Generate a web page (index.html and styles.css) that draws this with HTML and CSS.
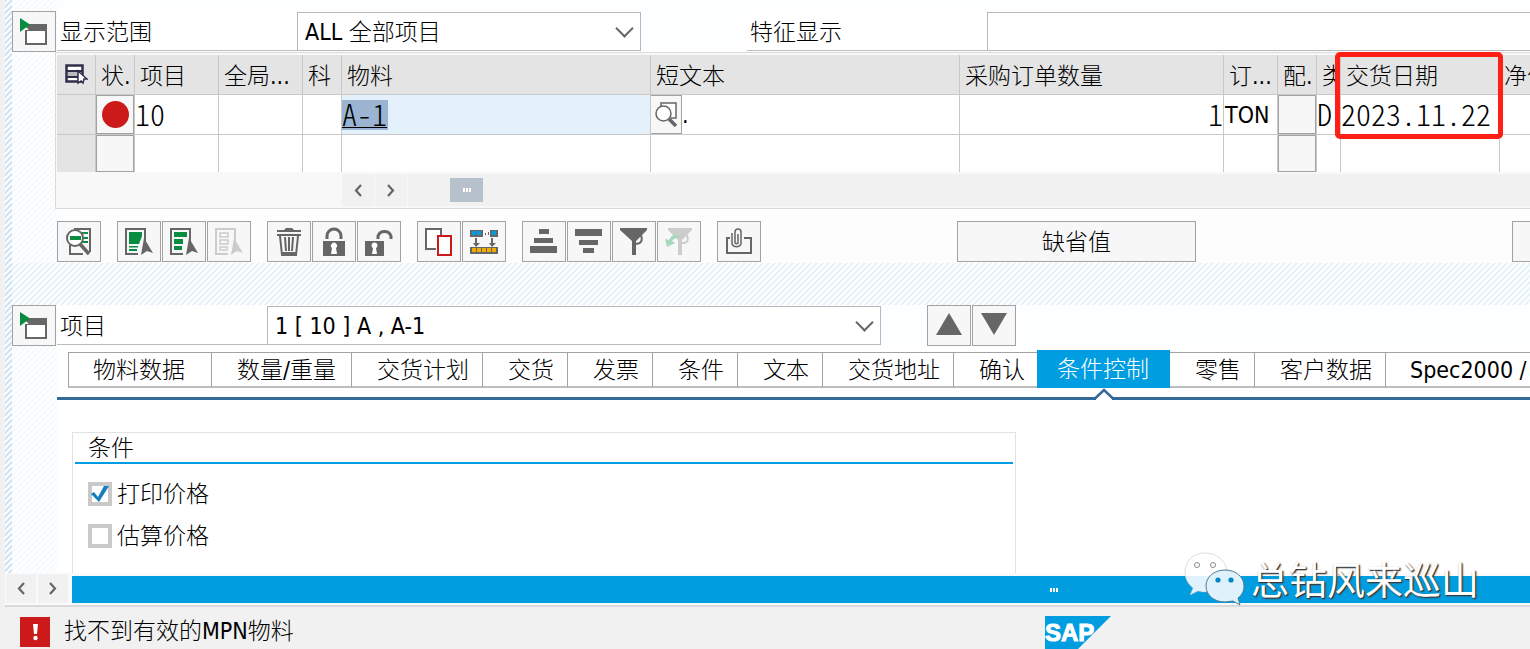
FILE: index.html
```html
<!DOCTYPE html>
<html lang="zh-CN">
<head>
<meta charset="utf-8">
<title>采购订单</title>
<link rel="stylesheet" href="styles.css">
</head>
<body>
<svg class="defs" aria-hidden="true">
  <symbol id="i-expand" viewBox="0 0 28 27"><path d="M6 6h21v21H5V12H9L6 9z" fill="#666"/><path d="M7 13h18v12H7z" fill="#fff"/><path d="M0 0l10 6.500L0 14z" fill="#078c40"/></symbol>
  <symbol id="i-left" viewBox="0 0 8 13"><path d="M7 1L2 6.500L7 12" fill="none" stroke="#666" stroke-width="2.200"/></symbol>
  <symbol id="i-right" viewBox="0 0 8 13"><path d="M1 1L6 6.500L1 12" fill="none" stroke="#666" stroke-width="2.200"/></symbol>
  <symbol id="i-doc" viewBox="0 0 28 28"><path d="M13 26H1V1h19v14" fill="none" stroke="currentColor" stroke-width="2"/></symbol>
  <symbol id="i-cursor" viewBox="0 0 28 28"><path d="M19 10l9 15-6-2-6 4z" fill="currentColor"/></symbol>
</svg>
<div class="app">
  <main class="work">
    <section class="row filter">
      <button class="ib" aria-label="展开抬头"><svg width="28" height="27"><use href="#i-expand"/></svg></button>
      <label class="lbl lbl-wide" for="scope">显示范围</label>
      <span class="pick pick-scope"><select id="scope"><option>ALL 全部项目</option></select></span>
      <label class="lbl lbl-feature" for="feature">特征显示</label>
      <input class="feature" id="feature" type="text">
    </section>

    <section class="grid-box">
      <table class="grid">
        <colgroup><col class="c39"><col class="c39"><col class="c84"><col class="c84"><col class="c39"><col class="c309"><col class="c309"><col class="c264"><col class="c54"><col class="c39"><col class="c24"><col class="c159"><col></colgroup>
        <thead>
          <tr>
            <th class="sel"><svg width="23" height="21" viewBox="0 0 23 21"><path d="M1.500 1.500h16v16h-16z" fill="#fff" stroke="#2f2f4a" stroke-width="2.500"/><path d="M2 6h16v2H2zM2 12h12v2H2z" fill="#2f2f4a"/><path d="M3 8h12v4H3z" fill="#bbb"/><path d="M13 7l9 8h-3l-1 4-2-2-3 2z" fill="#fff" stroke="#2f2f4a" stroke-width="1.500"/></svg></th>
            <th>状.</th><th>项目</th><th>全局...</th><th>科</th><th>物料</th><th>短文本</th><th>采购订单数量</th><th>订...</th><th>配.</th><th>类</th><th class="marked">交货日期<span class="mark"></span></th><th>净价</th>
          </tr>
        </thead>
        <tbody>
          <tr>
            <td class="sel"></td>
            <td><button class="cell-btn" aria-label="状态"><span class="dot"></span></button></td>
            <td class="mono">10</td><td></td><td></td>
            <td class="active"><input class="mono material" type="text" value="A-1" aria-label="物料"></td>
            <td><div class="text-cell"><button class="cell-btn help" aria-label="搜索帮助"><svg width="23" height="25" viewBox="0 0 23 25"><path d="M6 4V1h15v15h-5" fill="#fff" stroke="#666" stroke-width="1.500"/><circle cx="8.500" cy="11.500" r="7.500" fill="#fff" stroke="#666" stroke-width="1.500"/><path d="M14 17l7 7" stroke="#666" stroke-width="3.500"/></svg></button>.</div></td>
            <td class="mono num">1</td><td class="unit">TON</td>
            <td><button class="cell-btn" aria-label="配置"></button></td>
            <td class="mono">D</td><td class="mono">2023.11.22</td><td></td>
          </tr>
          <tr>
            <td class="sel"></td><td><button class="cell-btn" aria-label="状态"></button></td><td></td><td></td><td></td><td></td><td></td><td></td><td></td><td><button class="cell-btn" aria-label="配置"></button></td><td></td><td></td><td></td>
          </tr>
        </tbody>
      </table>
      <div class="hbar">
        <button aria-label="向左"><svg width="8" height="13"><use href="#i-left"/></svg></button>
        <button aria-label="向右"><svg width="8" height="13"><use href="#i-right"/></svg></button>
        <div class="track"><span class="thumb"><i></i><i></i><i></i></span></div>
      </div>
    </section>

    <section class="toolbar">
      <div class="grp"><button class="ib" aria-label="明细"><svg width="28" height="28" viewBox="0 0 28 28"><path d="M9 1h16v23M5 17v9h13" fill="none" stroke="#666" stroke-width="2"/><path d="M17 4h6v2h-6zM18 9h5v2h-5zM17 13h6v2h-6z" fill="#078c40"/><circle cx="10" cy="10" r="8" fill="#fff" stroke="#666" stroke-width="2"/><path d="M5 8h11v4H5z" fill="#078c40"/><path d="M15 16l9 10" stroke="#666" stroke-width="3.500"/></svg></button></div>
      <div class="grp">
        <button class="ib" aria-label="全选"><svg width="28" height="28" viewBox="0 0 28 28"><use href="#i-doc"/><path d="M4 4h13v4l-3 8H4zM4 18h9v1.500H4zM4 21h8v2H4z" fill="#078c40"/><use href="#i-cursor"/></svg></button>
        <button class="ib" aria-label="选择块"><svg width="28" height="28" viewBox="0 0 28 28"><use href="#i-doc"/><path d="M4 4h13v5H4zM4 11h9v5H4zM4 18h8v4H4z" fill="#078c40"/><use href="#i-cursor"/></svg></button>
        <button class="ib off" aria-label="取消选择" disabled><svg width="28" height="28" viewBox="0 0 28 28"><use href="#i-doc"/><path d="M5 5h8v4H5zM5 12h8v4H5zM5 19h7v3H5z" fill="none" stroke="currentColor" stroke-width="1.500"/><use href="#i-cursor"/></svg></button>
      </div>
      <div class="grp">
        <button class="ib" aria-label="删除"><svg width="28" height="30" viewBox="0 0 28 30"><path d="M2 3h7l2-2h6l2 2h7v2H2z" fill="#666"/><path d="M2 8h24M5 9l2 19h14l2-19M10 10l1 14M14 10v14M18 10l-1 14" fill="none" stroke="#666" stroke-width="2"/><path d="M7 25h14v4H7z" fill="#666"/></svg></button>
        <button class="ib" aria-label="锁定"><svg width="28" height="30" viewBox="0 0 28 30"><path d="M7 12V9a7 7 0 0 1 14 0v3" fill="none" stroke="#666" stroke-width="3"/><path d="M3 14h22v15H3z" fill="#666"/><path d="M11 27l1-6a3 3 0 1 1 4 0l1 6z" fill="#fff"/></svg></button>
        <button class="ib" aria-label="解锁"><svg width="28" height="30" viewBox="0 0 28 30"><path d="M13 12V9a7 7 0 0 1 13 0v3" fill="none" stroke="#666" stroke-width="3"/><path d="M0 14h19v15H0z" fill="#666"/><path d="M7 27l1-6a3 3 0 1 1 3 0l1 6z" fill="#fff"/></svg></button>
      </div>
      <div class="grp">
        <button class="ib" aria-label="复制"><svg width="28" height="28" viewBox="0 0 28 28"><path d="M11 21H1V1h15v6" fill="#fff" stroke="#666" stroke-width="2"/><path d="M13 8h13v19H13z" fill="#fff" stroke="#cc1a1a" stroke-width="2"/></svg></button>
        <button class="ib" aria-label="替换值"><svg width="28" height="26" viewBox="0 0 28 26"><path d="M0 1h28v7H0z" fill="#666"/><path d="M2 2h4v4H2zM7 2h4v4H7zM22 2h4v4h-4z" fill="#009de0"/><path d="M13 0h7v9h-7z" fill="#f7f7f7"/><path d="M15 4h1v2h-1zM18 3h1v3h-1z" fill="#666"/><path d="M6 9v7M22 9v7" stroke="#666" stroke-width="2"/><path d="M3 14h7l-4 4zM19 14h7l-4 4zM0 18h28v7H0z" fill="#666"/><path d="M2 19h4v4H2zM7 19h4v4H7zM12 19h4v4h-4zM17 19h4v4h-4zM22 19h4v4h-4z" fill="#f0ab00"/></svg></button>
      </div>
      <div class="grp">
        <button class="ib" aria-label="升序"><svg width="28" height="26" viewBox="0 0 28 26"><path d="M9 0h10v5H9zM4 9h19v5H4zM0 17h27v7H0z" fill="#666"/></svg></button>
        <button class="ib" aria-label="降序"><svg width="28" height="26" viewBox="0 0 28 26"><path d="M0 0h27v7H0zM4 11h19v5H4zM8 19h11v5H8z" fill="#666"/></svg></button>
        <button class="ib" aria-label="过滤"><svg width="28" height="28" viewBox="0 0 28 28"><path d="M0 0h27v2L16 13v14h-4V13L0 2z" fill="#666"/><path d="M21 7c2 6 0 9-6 9" fill="none" stroke="#666" stroke-width="2"/></svg></button>
        <button class="ib off" aria-label="取消过滤" disabled><svg width="28" height="28" viewBox="0 0 28 28"><path d="M3 0h24v2L17 12v15h-4V12L3 2z" fill="currentColor"/><path d="M22 7c2 6 0 8-5 8" fill="none" stroke="currentColor" stroke-width="2"/><path d="M14 7C8 6 6 8 4 12L0 11l2 8 8-4-3-2c1-2 3-3 7-3z" fill="#a9d8bd"/></svg></button>
      </div>
      <div class="grp"><button class="ib" aria-label="附件"><svg width="28" height="28" viewBox="0 0 28 28"><path d="M5 10H2v15h24V10h-7" fill="none" stroke="#666" stroke-width="2"/><path d="M7 5v11a5 5 0 0 0 9 0V4a3 3 0 0 0-6 0v11a2 2 0 0 0 3 0V6" fill="none" stroke="#666" stroke-width="1.500"/></svg></button></div>
      <button class="wide">缺省值</button>
      <button class="wide next" aria-label="更多"></button>
    </section>

    <section class="row item">
      <button class="ib" aria-label="展开项目"><svg width="28" height="27"><use href="#i-expand"/></svg></button>
      <label class="lbl lbl-item" for="item">项目</label>
      <span class="pick pick-item"><select id="item"><option>1 [ 10 ] A , A-1</option></select></span>
      <div class="grp nav">
        <button class="ib" aria-label="上一项"><svg width="28" height="26" viewBox="0 0 28 26"><path d="M14 0l13 22H1z" fill="#666"/></svg></button>
        <button class="ib" aria-label="下一项"><svg width="28" height="26" viewBox="0 0 28 26"><path d="M1 0h26L14 22z" fill="#666"/></svg></button>
      </div>
    </section>

    <section class="detail">
      <nav class="tabs">
        <button>物料数据</button><button class="pair">数量/重量</button><button>交货计划</button><button>交货</button><button>发票</button><button>条件</button><button>文本</button><button>交货地址</button><button class="last">确认</button><button class="on">条件控制<svg class="notch" width="20" height="12" viewBox="0 0 20 12"><path d="M2 10l8-8 8 8v2H2z" fill="#fff"/><path d="M1 10.500L10 2l9 8.500" fill="none" stroke="#346a97" stroke-width="2.500"/></svg></button><button>零售</button><button>客户数据</button><button>Spec2000 /</button>
      </nav>
      <div class="panel">
        <h2>条件</h2>
        <label class="check"><input type="checkbox" checked><svg class="tick" width="20" height="20" viewBox="0 0 20 20"><path d="M1 10l3-2 4 5 6-11h5L9 18z" fill="#147fc0"/></svg>打印价格</label>
        <label class="check"><input type="checkbox">估算价格</label>
      </div>
    </section>
  </main>

  <div class="page-bar">
    <button aria-label="向左"><svg width="8" height="13"><use href="#i-left"/></svg></button>
    <button aria-label="向右"><svg width="8" height="13"><use href="#i-right"/></svg></button>
    <div class="blue"><i></i><i></i><i></i></div>
  </div>

  <footer class="status">
    <svg class="err" width="30" height="30" viewBox="0 0 30 30"><path d="M0 0h30v30H0z" fill="#cc1a1a"/><path d="M13 7h5l-1 10h-3z" fill="#fff"/><circle cx="15.500" cy="21" r="2.200" fill="#fff"/></svg>
    <span class="msg">找不到有效的MPN物料</span>
    <svg class="sap" width="66" height="33" viewBox="0 0 66 33"><path d="M0 0h66L33 33H0z" fill="#009de0"/><text x="0" y="25" class="sap-text">SAP</text></svg>
  </footer>

  <div class="watermark">
    <svg width="62" height="54" viewBox="0 0 62 54"><path d="M22 1C10 1 2 9 2 20c0 7 3 12 8 16l-3 7 8-4c3 1 6 1 9 1 0-11 7-20 20-21C42 8 34 1 22 1z" fill="#fff" fill-opacity=".88" stroke="#bbb" stroke-width=".5"/><path d="M42 18c-11 0-19 7-19 16s8 16 19 16l8-1 7 4-2-7c4-3 6-7 6-12 0-9-8-16-19-16z" fill="#dff2fb" stroke="#4b7d93" stroke-width="1"/><g fill="#fff" stroke="#888"><circle cx="14" cy="13" r="2.500"/><circle cx="30" cy="13" r="2.500"/></g><g fill="#0087c4"><circle cx="35" cy="28" r="2.600"/><circle cx="48" cy="28" r="2.600"/></g></svg>
    <span>总钻风来巡山</span>
  </div>
</div>
</body>
</html>
```
FILE: styles.css
```css
* { box-sizing: border-box; }
body {
  margin: 0;
  background: #f1f1f1;
  color: #000;
  font: 300 23px/30px "DejaVu Sans Condensed", "Noto Sans", "Noto Sans CJK SC", sans-serif;
}
button, input, select { margin: 0; padding: 0; border-radius: 0; font: inherit; color: inherit; }
svg { display: block; flex: none; }
.defs { position: absolute; width: 0; height: 0; }

.app { position: relative; display: flex; flex-direction: column; min-height: 100vh; overflow: hidden; }
.work {
  flex: 1;
  margin-left: 5px;
  padding: 11px 0 0 7px;
  background:
    linear-gradient(135deg, #cfe4f3 25%, #fbfdfe 25% 50%, #cfe4f3 50% 75%, #fbfdfe 75%) 0 0 / 6px 6px,
    #fff;
  position: relative;
}
.work > section { position: relative; }
.work::before {
  content: "";
  position: absolute;
  inset: 0 0 0 7px;
  background: linear-gradient(135deg, #f6fafd 25%, #fdfeff 25% 50%, #f6fafd 50% 75%, #fdfeff 75%) 0 0 / 6px 6px;
}

.row { display: flex; align-items: center; height: 41px; }
.filter::before { content: ""; position: absolute; inset: -11px 0 0 45px; background: #fdfeff; }
.filter > * { position: relative; }
.ib {
  display: flex; align-items: center; justify-content: center; flex: none;
  width: 44px; height: 41px;
  background: #f7f7f7; border: 1px solid #a3a3a3; color: #666;
}
.ib.off { color: #ccc; }
.lbl { height: 39px; padding: 5px 0 0 3px; flex: none; border-bottom: 1px solid #bdbdbd; background: #fff; margin-left: 1px; }
.lbl-wide { width: 240px; }
.lbl-item { width: 210px; }
.lbl-feature { width: 240px; margin-left: 106px; }
.pick { position: relative; display: flex; flex: none; height: 39px; }
.pick::after {
  content: ""; position: absolute; right: 10px; top: 10px; width: 11px; height: 11px;
  border: solid #666; border-width: 0 2px 2px 0; transform: rotate(45deg); pointer-events: none;
}
.pick-scope { width: 344px; }
.pick-item { width: 614px; }
.pick select { appearance: none; width: 100%; padding: 0 7px; border: 1px solid #b8b8b8; background: #fff; outline: 0; }
.feature { flex: 1; min-width: 0; height: 39px; border: 1px solid #b8b8b8; border-right: 0; background: #fff; }

.grid-box { margin-left: 43px; padding: 2px 0 2px 1px; background: #f8f8f8; border: 1px solid #dadada; border-right: 0; }
.grid { width: 100%; table-layout: fixed; border-collapse: separate; border-spacing: 0; background: #fff; }
.c24 { width: 24px; } .c39 { width: 39px; } .c54 { width: 54px; } .c84 { width: 84px; }
.c159 { width: 159px; } .c264 { width: 264px; } .c309 { width: 309px; }
.grid th, .grid td {
  padding: 0; overflow: hidden; white-space: nowrap; text-align: left; vertical-align: middle;
  border-right: 1px solid #c8c8c8; border-bottom: 1px solid #c8c8c8;
}
.grid th:last-child, .grid td:last-child { border-right: 0; }
.grid th { height: 40px; padding: 2px 0 0 5px; background: #e4e4e4; font-weight: 300; }
.grid th:last-child { padding-left: 4px; }
.grid th.sel { padding: 0 0 0 8px; }
.grid td { height: 40px; }
.grid tbody tr:last-child td { height: 37px; border-bottom: 0; }
.grid td.sel { background: #e4e4e4; }
.grid .marked { position: relative; overflow: visible; }
.mark {
  position: absolute; left: -6px; top: -3px; width: 168px; height: 87px;
  border: 5px solid #ff1f14; border-radius: 5px; z-index: 2; pointer-events: none;
}
.mono { font: 300 30px/34px "Noto Sans CJK SC", sans-serif; font-feature-settings: "hwid"; }
.grid td.mono { padding-bottom: 4px; }
.grid .num { text-align: right; }
.grid .unit { padding-left: 1px; }
.grid td.active { background: #e4f1fa; }
.material {
  display: block; width: 46px; height: 30px; padding-bottom: 4px; border: 0; outline: 0;
  background: linear-gradient(#000, #000) 0 27px / 45px 1px no-repeat #9ab4d2;
}
.cell-btn { display: flex; align-items: center; justify-content: center; width: 100%; height: 39px; background: #f7f7f7; border: 1px solid #a3a3a3; }
.grid tbody tr:last-child .cell-btn { height: 37px; }
.dot { width: 27px; height: 27px; border-radius: 50%; background: #cc1a1a; }
.text-cell { display: flex; align-items: center; }
.cell-btn.help { width: 31px; border-left: 0; }

.hbar { display: flex; gap: 1px; height: 32px; margin: 2px 0 0 285px; }
.hbar button, .page-bar button { display: flex; align-items: center; justify-content: center; width: 32px; background: #f1f1f1; border: 0; }
.track { flex: 1; display: flex; align-items: center; padding-left: 42px; background: #f1f1f1; }
.thumb { display: flex; align-items: center; justify-content: center; gap: 1px; width: 33px; height: 24px; background: #b7c1cc; }
.thumb i, .blue i { width: 2px; height: 4px; background: #fff; }

.toolbar { display: flex; gap: 16px; margin-left: 45px; padding: 12px 0 1px; background: #fdfdfd; overflow: hidden; }
.grp { display: flex; gap: 1px; flex: none; }
.wide { flex: none; width: 239px; height: 41px; margin-left: 180px; background: #f7f7f7; border: 1px solid #a3a3a3; }
.wide.next { margin-left: 300px; }

.item { margin-top: 42px; }
.item::after { content: ""; position: absolute; inset: 0 0 0 45px; background: #fdfeff; z-index: -1; }
.item::before {
  content: ""; position: absolute; left: 0; right: 0; top: -42px; height: 42px;
  background: linear-gradient(135deg, #e8f2fa 25%, #fdfeff 25% 50%, #e8f2fa 50% 75%, #fdfeff 75%) 0 0 / 6px 6px;
}
.work > .item { z-index: 0; }
.nav { margin-left: 46px; }

.detail { margin-left: 45px; padding-top: 4px; background: #fff; }
.tabs { display: flex; align-items: flex-end; padding: 0 0 9px 11px; border-bottom: 3px solid #346a97; }
.tabs button {
  flex: none; height: 36px; padding: 0 13px 0 25px; white-space: nowrap; text-align: left;
  background: #fff; border: solid #a3a3a3; border-width: 1px 1px 2px 0; border-bottom-color: #bdbdbd;
}
.tabs button:first-child { border-left-width: 1px; padding: 0 26px 0 24px; }
.tabs .pair { width: 140px; padding-right: 0; }
.tabs .last { width: 83px; padding-right: 0; border-right: 0; }
.tabs .on { position: relative; height: 38px; padding: 0 21px 0 20px; border: 0; background: #009de0; color: #fff; }
.tabs button:last-child { padding-left: 24px; }
.notch { position: absolute; left: 57px; top: 38px; }
.panel { width: 944px; height: 141px; margin: 32px 0 0 15px; padding: 0 2px; border: 1px solid #e2e2e2; border-bottom: 0; }
.panel h2 { margin: 0 0 15px; padding-left: 13px; font: inherit; height: 31px; border-bottom: 2px solid #009de0; }
.check { position: relative; display: flex; align-items: center; gap: 5px; width: max-content; margin: 0 0 12px 13px; }
.check input { appearance: none; width: 24px; height: 24px; border: 4px solid #c9c9c9; background: #fff; }
.tick { position: absolute; left: 2px; top: 5px; }

.page-bar { display: flex; gap: 2px; height: 34px; margin-left: 5px; padding: 1px 0 2px 1px; border-bottom: 2px solid #dadada; background: #fafafa; }
.page-bar button { width: 30px; }
.blue { display: flex; align-items: center; gap: 1px; flex: 1; margin: 2px 0 0 2px; padding-left: 978px; background: #009de0; }
.status { display: flex; align-items: center; height: 42px; padding: 8px 0 0 20px; }
.msg { flex: none; width: 981px; margin: -3px 0 0 14px; }
.sap-text { font: bold 24px "Liberation Sans", sans-serif; fill: #fff; stroke: #fff; stroke-width: 1px; }

.watermark {
  position: absolute; right: 51px; bottom: 41px; display: flex; align-items: center; gap: 6px;
  color: #fff; font-size: 38px; font-weight: 400; line-height: 54px; text-shadow: 1px 1px 1px #333, 1px 1px 2px #555;
}
.watermark span { padding-top: 4px; }
```
